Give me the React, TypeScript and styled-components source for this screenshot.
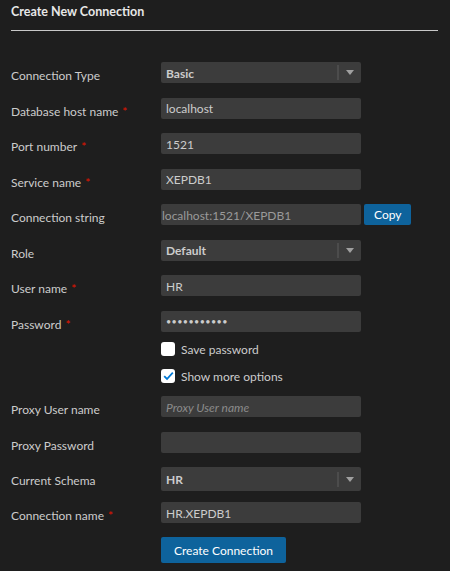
import React from 'react';
import styled, {createGlobalStyle} from 'styled-components';

const GlobalStyle = createGlobalStyle`
    body {
        margin: 0;
        background-color: #1e1e1e;
        font-family: Lato, "Open Sans", sans-serif;
        color: #cccccc;
    }
`

const Page = styled.div`
    padding: 0 12px 0 11px;
`

const Title = styled.h1`
    margin: 3px 0 0 0;
    line-height: 18px;
    font-size: 12.5px;
    font-weight: 700;
    color: #e7e7e7;
`

const Rule = styled.div`
    height: 1px;
    margin-top: 9px;
    background-color: #c8c8c8;
`

const Form = styled.form`
    margin-top: 31px;
    display: flex;
    flex-direction: column;
`

interface RowProps {
    $after?: number
    $height?: number
}

const Row = styled.div<RowProps>`
    height: ${({$height}) => $height ?? 21}px;
    display: flex;
    align-items: flex-start;
    margin-bottom: ${({$after}) => $after ?? 14.5}px;
`

const Label = styled.label`
    width: 150px;
    flex-shrink: 0;
    padding-top: 7px;
    font-size: 12px;
    line-height: 14px;
    color: #cccccc;
`

const Required = styled.span`
    margin-left: 4px;
    color: #e51400;
`

interface FieldProps {
    $height?: number
    $dim?: boolean
}

const Input = styled.input<FieldProps>`
    box-sizing: border-box;
    width: 200px;
    height: ${({$height}) => $height ?? 21}px;
    margin: 0;
    padding: 1px 5px 0 5px;
    border: none;
    border-radius: 2px;
    outline: none;
    background-color: #3c3c3c;
    font-family: inherit;
    font-size: 12px;
    color: ${({$dim}) => $dim ? '#9a9a9a' : '#cccccc'};

    &::placeholder {
        font-style: italic;
        color: #8b8b8b;
    }
`

const ReadOnlyInput = styled(Input)`
    padding-left: 1px;
`

const PasswordInput = styled(Input)`
    font-size: 9px;
    letter-spacing: 0.4px;
`

const Select = styled.div<FieldProps>`
    box-sizing: border-box;
    width: 200px;
    height: ${({$height}) => $height ?? 21}px;
    display: flex;
    align-items: center;
    padding-left: 5px;
    border-radius: 2px;
    background-color: #3c3c3c;
    font-size: 12px;
    font-weight: 700;
    color: #cccccc;
`

const SelectValue = styled.span`
    flex: 1;
    padding-top: 1px;
`

const SelectDivider = styled.span`
    width: 2px;
    height: 15px;
    background-color: #4c4c4c;
`

const SelectArrow = styled.span`
    width: 22px;
    display: flex;
    justify-content: center;

    &::after {
        content: "";
        border-left: 4.5px solid transparent;
        border-right: 4.5px solid transparent;
        border-top: 5px solid #a0a0a0;
    }
`

const Button = styled.button`
    height: 21px;
    margin-left: 3px;
    padding: 0 10px;
    border: none;
    border-radius: 2px;
    background-color: #0e639c;
    font-family: inherit;
    font-size: 12px;
    color: #ffffff;
`

const SubmitButton = styled(Button)`
    height: 26px;
    margin-left: 150px;
    padding: 0 13px;
    align-self: flex-start;
`

const CheckRow = styled.label<RowProps>`
    display: flex;
    align-items: center;
    height: 14px;
    margin-left: 150px;
    margin-bottom: ${({$after}) => $after ?? 13}px;
    font-size: 12px;
    color: #cccccc;
`

const Box = styled.span`
    box-sizing: border-box;
    width: 14px;
    height: 14px;
    margin-right: 6px;
    display: flex;
    align-items: center;
    justify-content: center;
    border-radius: 3px;
    background-color: #ffffff;
`

function Checkbox({checked, label}: {checked: boolean, label: string}) {
    return (
        <>
            <Box>
                {checked && (
                    <svg width="11" height="10" viewBox="0 0 11 10">
                        <path d="M1.2 5.2 L4 8 L9.8 1.6" fill="none" stroke="#0078d4" strokeWidth="1.8"/>
                    </svg>
                )}
            </Box>
            {label}
        </>
    );
}

function App() {
    return (
        <Page>
            <GlobalStyle/>
            <Title>Create New Connection</Title>
            <Rule/>
            <Form onSubmit={e => e.preventDefault()}>
                <Row>
                    <Label>Connection Type</Label>
                    <Select>
                        <SelectValue>Basic</SelectValue>
                        <SelectDivider/>
                        <SelectArrow/>
                    </Select>
                </Row>
                <Row>
                    <Label>Database host name<Required>*</Required></Label>
                    <Input defaultValue="localhost"/>
                </Row>
                <Row>
                    <Label>Port number<Required>*</Required></Label>
                    <Input defaultValue="1521"/>
                </Row>
                <Row>
                    <Label>Service name<Required>*</Required></Label>
                    <Input defaultValue="XEPDB1"/>
                </Row>
                <Row>
                    <Label>Connection string</Label>
                    <ReadOnlyInput $dim readOnly value="localhost:1521/XEPDB1"/>
                    <Button type="button">Copy</Button>
                </Row>
                <Row>
                    <Label>Role</Label>
                    <Select>
                        <SelectValue>Default</SelectValue>
                        <SelectDivider/>
                        <SelectArrow/>
                    </Select>
                </Row>
                <Row>
                    <Label>User name<Required>*</Required></Label>
                    <Input defaultValue="HR"/>
                </Row>
                <Row $after={10.5}>
                    <Label>Password<Required>*</Required></Label>
                    <PasswordInput readOnly value={'\u2022'.repeat(11)}/>
                </Row>
                <CheckRow>
                    <Checkbox checked={false} label="Save password"/>
                </CheckRow>
                <CheckRow>
                    <Checkbox checked label="Show more options"/>
                </CheckRow>
                <Row>
                    <Label>Proxy User name</Label>
                    <Input placeholder="Proxy User name"/>
                </Row>
                <Row>
                    <Label>Proxy Password</Label>
                    <Input type="password"/>
                </Row>
                <Row $height={24} $after={11}>
                    <Label>Current Schema</Label>
                    <Select $height={24}>
                        <SelectValue>HR</SelectValue>
                        <SelectDivider/>
                        <SelectArrow/>
                    </Select>
                </Row>
                <Row $after={14}>
                    <Label>Connection name<Required>*</Required></Label>
                    <Input defaultValue="HR.XEPDB1"/>
                </Row>
                <SubmitButton type="submit">Create Connection</SubmitButton>
            </Form>
        </Page>
    );
}

export default App;
